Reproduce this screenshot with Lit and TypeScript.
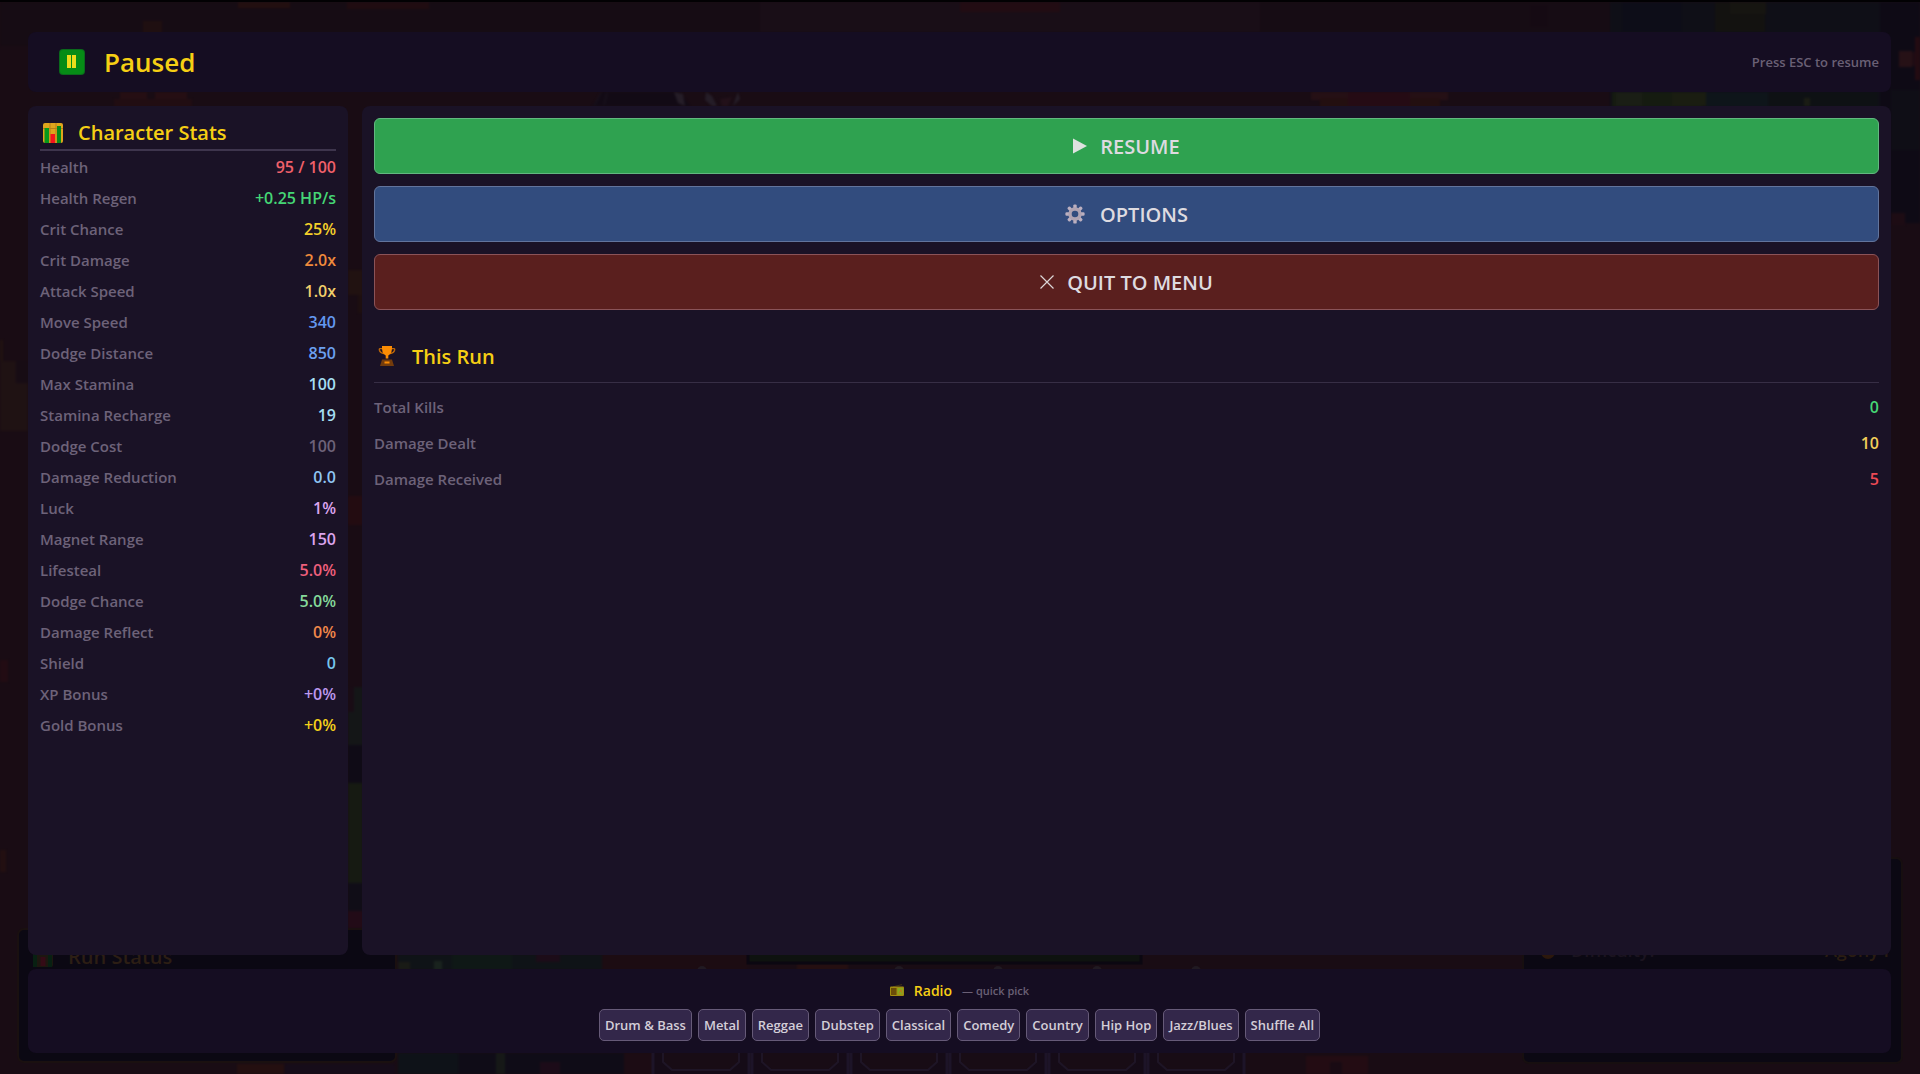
import { LitElement, html, svg, css } from "lit";
import { customElement } from "lit/decorators.js";

type Row = [label: string, value: string, color: string];
type Tile = [x: number, y: number, w: number, h: number, color: string];

const STATS: Row[] = [
  ["Health", "95 / 100", "#f0606a"],
  ["Health Regen", "+0.25 HP/s", "#45d675"],
  ["Crit Chance", "25%", "#f4d02a"],
  ["Crit Damage", "2.0x", "#f08a3c"],
  ["Attack Speed", "1.0x", "#f2cf6a"],
  ["Move Speed", "340", "#6398f0"],
  ["Dodge Distance", "850", "#6ba0f0"],
  ["Max Stamina", "100", "#a5dff2"],
  ["Stamina Recharge", "19", "#a5dff2"],
  ["Dodge Cost", "100", "#6d6279"],
  ["Damage Reduction", "0.0", "#8fc4f2"],
  ["Luck", "1%", "#dca4ee"],
  ["Magnet Range", "150", "#dca4ee"],
  ["Lifesteal", "5.0%", "#ee5f7c"],
  ["Dodge Chance", "5.0%", "#85d99a"],
  ["Damage Reflect", "0%", "#f0874a"],
  ["Shield", "0", "#76c6ee"],
  ["XP Bonus", "+0%", "#bd98ee"],
  ["Gold Bonus", "+0%", "#f4d01a"],
];

const RUN: Row[] = [
  ["Total Kills", "0", "#45d675"],
  ["Damage Dealt", "10", "#f2cf5a"],
  ["Damage Received", "5", "#ee4a55"],
];

const STATIONS = ["Drum & Bass", "Metal", "Reggae", "Dubstep", "Classical", "Comedy", "Country", "Hip Hop", "Jazz/Blues", "Shuffle All"];

// Dimmed map tiles and sprites of the level behind the menu.
const TILES: Tile[] = [
  [0, 2, 1920, 44, "#160c14"],
  [760, 2, 500, 30, "#190f18"],
  [238, 2, 52, 6, "#26100f"],
  [347, 2, 82, 7, "#230c10"],
  [143, 21, 19, 14, "#221010"],
  [960, 2, 100, 10, "#250d13"],
  [1530, 5, 18, 22, "#140a13"],
  [1610, 2, 310, 106, "#0c1018"],
  [1622, 2, 60, 30, "#0a0e1a"],
  [1715, 2, 50, 30, "#11140f"],
  [1730, 2, 36, 12, "#161810"],
  [1880, 2, 40, 221, "#0b0a16"],
  [1891, 90, 29, 60, "#0c0f17"],
  [1899, 51, 13, 16, "#2b1317"],
  [1912, 52, 8, 14, "#210b14"],
  [1915, 37, 5, 43, "#270b12"],
  [1891, 213, 14, 12, "#1f0c15"],
  [120, 92, 27, 16, "#290f13"],
  [155, 92, 32, 16, "#290f13"],
  [114, 99, 78, 8, "#240e12"],
  [1311, 92, 137, 8, "#2a1216"],
  [1320, 98, 120, 10, "#27100f"],
  [1348, 92, 62, 14, "#2a0b15"],
  [1612, 92, 90, 15, "#14200f"],
  [1616, 92, 26, 14, "#1b2416"],
  [1672, 92, 34, 14, "#1b2310"],
  [1706, 92, 62, 15, "#0b181d"],
  [1768, 92, 110, 15, "#0b1315"],
  [1804, 98, 6, 8, "#1b2214"],
  [0, 340, 3, 22, "#241510"],
  [0, 361, 28, 70, "#211413"],
  [16, 361, 12, 22, "#170c15"],
  [0, 660, 8, 22, "#250d13"],
  [0, 850, 6, 22, "#261110"],
  [348, 270, 15, 25, "#241410"],
  [358, 295, 5, 18, "#20110f"],
  [348, 496, 15, 29, "#270c11"],
  [348, 687, 15, 58, "#131a19"],
  [348, 687, 6, 25, "#190d16"],
  [348, 745, 15, 38, "#0c0b17"],
  [348, 783, 15, 100, "#151f12"],
  [348, 883, 15, 28, "#0e0e19"],
  [348, 911, 15, 17, "#260b18"],
  [398, 954, 204, 16, "#0c1618"],
  [398, 962, 12, 8, "#1a2017"],
  [434, 961, 8, 9, "#1a2b22"],
  [452, 954, 60, 16, "#0c1c17"],
  [536, 954, 24, 8, "#1d0c1a"],
  [602, 954, 146, 16, "#1d0c12"],
  [797, 964, 51, 6, "#2a1110"],
  [237, 1064, 47, 10, "#28110f"],
  [285, 1064, 110, 10, "#150c1b"],
  [398, 1053, 228, 21, "#0c0d18"],
  [398, 1053, 60, 21, "#0b151a"],
  [496, 1053, 9, 21, "#151d18"],
  [540, 1062, 20, 12, "#1e0b1a"],
  [624, 1053, 30, 21, "#1e0c14"],
  [1306, 1056, 62, 18, "#270d13"],
  [1330, 1062, 12, 12, "#190a13"],
];

const SLOTS = [653, 752, 851, 950, 1049, 1148];

const scene = svg`<svg class="scene" viewBox="0 0 1920 1074" preserveAspectRatio="none" aria-hidden="true">
  <g class="tiles">
    ${TILES.map(([x, y, w, h, c]) => svg`<rect x=${x} y=${y} width=${w} height=${h} fill=${c}/>`)}
    <path d="M592 106L602 92H680L690 106Z" fill="#100a16"/>
    <path d="M594 106L601 93M604 105L607 93" stroke="#191420" stroke-width="1.500"/>
    <path d="M674 92L678 103L685 106L683 94ZM706 92L705 100L712 106H717L712 96ZM738 92L740 99L733 106L736 97Z" fill="#29232e"/>
    <path d="M720 99L732 97L728 106H722Z" fill="#25121b"/>
  </g>
  <rect width="1920" height="2" fill="#020103"/>
  <rect x="748" y="940" width="393" height="23" fill="#0e120f" stroke="#0b0711" stroke-width="3"/>
  ${[702, 899, 998, 1097, 1196].map((x) => svg`<circle cx=${x} cy="971" r="5" fill="#211a22"/>`)}
  ${SLOTS.map((x) => svg`
    <rect x=${x} y="1030" width="96" height="60" rx="8" fill="#150b17" stroke="#1d1428" stroke-width="3"/>
    <path d="M${x + 10} 1040V1062L${x + 19} 1070H${x + 77}L${x + 86} 1062V1040Z" fill="#180c15" stroke="#1e1526" stroke-width="2"/>`)}
  <rect x="18" y="929" width="378" height="133" rx="6" fill="#0b0813" stroke="#1a1010" stroke-width="2"/>
  <rect x="1523" y="858" width="379" height="205" rx="6" fill="#0b0813" stroke="#170f10" stroke-width="2"/>
  <rect x="33" y="947" width="20" height="20" rx="2" fill="#1d1710"/>
  <path d="M35 952V967M50 950V967" stroke="#082012" stroke-width="4"/>
  <path d="M43 957V966" stroke="#340b16" stroke-width="5"/>
  <text class="scene-text" x="68" y="964" fill="#2c1e14">Run Status</text>
  <circle cx="1548" cy="952" r="7" fill="#2c180c"/>
  <text class="scene-text small" x="1571" y="957" fill="#1b1420">Difficulty:</text>
  <text class="scene-text small" x="1889" y="957" text-anchor="end" fill="#2a1d12">Agony I</text>
</svg>`;

const pauseIcon = svg`<svg class="icon-lg" viewBox="0 0 26 26" aria-hidden="true">
  <rect width="26" height="26" rx="4" fill="#0a6a1c"/><rect x="1" y="1" width="24" height="24" rx="3" fill="#068c16"/>
  <rect x="8" y="6" width="4" height="13" fill="#ecdc1c"/><rect x="13" y="6" width="4" height="13" fill="#ecdc1c"/></svg>`;

const chartIcon = svg`<svg class="icon" viewBox="0 0 20 20" aria-hidden="true">
  <rect width="20" height="20" rx="2" fill="#dfa51c"/>
  <path d="M0 5.500H20M7 0V20M13 0V20" stroke="#b8801a" stroke-width="1"/>
  <rect x="1.500" y="5" width="4.500" height="15" fill="#06981a"/>
  <rect x="14" y="3" width="4" height="17" fill="#068a18"/>
  <rect x="7.500" y="11" width="4.500" height="9" fill="#f4141c"/></svg>`;

const trophyIcon = svg`<svg class="icon" viewBox="0 0 20 20" aria-hidden="true">
  <path d="M5.500 2.600H3Q2 2.600 2.400 4.200Q3.200 7 7 7.600M14.500 2.600H17Q18 2.600 17.600 4.200Q16.800 7 13 7.600" fill="none" stroke="#c06808" stroke-width="1.300"/>
  <path d="M5 0H15Q15.600 7.600 11.300 9.500V12.500H8.700V9.500Q4.400 7.600 5 0Z" fill="#fb8c04"/>
  <path d="M5 13.500H15L17 20H3Z" fill="#743c0c"/><rect x="7.500" y="15.500" width="5" height="2" fill="#fb8c04"/></svg>`;

const radioIcon = svg`<svg class="icon-sm" viewBox="0 0 14 12" aria-hidden="true">
  <path d="M3 2.800L12 .6" stroke="#4d3f14" stroke-width=".8"/>
  <rect y="2.500" width="14" height="9.500" rx="1" fill="#a08a10"/>
  <rect x="1" y="4" width="5.500" height="7" fill="#6a4c08"/>
  <rect x="7.500" y="4" width="5.500" height="6.500" fill="#84a81e"/>
  <path d="M9 9.500L11 5.500L12 9.500" stroke="#b8781a" fill="none"/></svg>`;

const playIcon = svg`<svg class="glyph" viewBox="0 0 14 16" aria-hidden="true"><path d="M0 .5L14 8L0 15.500Z" fill="#dfe2e0"/></svg>`;

const gearIcon = svg`<svg class="icon" viewBox="0 0 20 20" aria-hidden="true"><g fill="#bcb0c0">
  ${[0, 45, 90, 135, 180, 225, 270, 315].map((a) => svg`<rect x="8.300" y=".4" width="3.400" height="5" rx="1.200" transform="rotate(${a} 10 10)"/>`)}</g>
  <circle cx="10" cy="10" r="5" fill="none" stroke="#b0a3b2" stroke-width="3.400"/></svg>`;

const closeIcon = svg`<svg class="glyph" viewBox="0 0 14 16" aria-hidden="true"><path d="M.5 1.500L13.500 14.500M13.500 1.500L.5 14.500" stroke="#dcd6d6" stroke-width="1.200"/></svg>`;

@customElement("app-root")
export class AppRoot extends LitElement {
  static styles = css`
    :host {
      display: block;
      font-family: "Open Sans", "Noto Sans", sans-serif;
      font-weight: 600;
      color: #dedbe0;
    }
    * { box-sizing: border-box; }
    .screen {
      position: relative;
      min-height: 100vh;
      padding: 32px 29px 21px 28px;
      display: flex;
      flex-direction: column;
      gap: 14px;
      background: #190c14;
      overflow: hidden;
    }
    .scene {
      position: absolute;
      inset: 0;
      width: 100%;
      height: 100%;
    }
    .tiles { opacity: 0.75; filter: blur(1px); }
    .scene-text { font-size: 20px; }
    .scene-text.small { font-size: 18px; }
    .bar, .panel { position: relative; border-radius: 8px; }
    .bar { background: #150d22; }
    .panel { background: #1a1226; padding: 11px 12px 12px; }
    .header {
      height: 60px;
      padding: 0 12px 0 31px;
      display: flex;
      align-items: center;
      gap: 19px;
    }
    h1, h2 { margin: 0; font-weight: 600; color: #f6cf14; }
    h1 { font-size: 26px; flex: 1; }
    h2 { font-size: 20px; }
    .hint { font-size: 13px; color: #6a6075; }
    .body { flex: 1; display: flex; gap: 14px; }
    .stats { width: 320px; }
    .main { flex: 1; padding-top: 12px; }
    .title {
      display: flex;
      align-items: center;
      gap: 15px;
      padding-left: 3px;
      border-bottom: 1px solid #372e45;
    }
    .stats .title { height: 34px; border-bottom: 2px solid #3e354d; padding-bottom: 1px; }
    .main .title { height: 49px; margin: 24px 0 6px; padding-bottom: 4px; }
    table { width: 100%; border-collapse: collapse; }
    th { text-align: left; font-size: 15px; font-weight: 600; color: #6d6279; padding: 0; }
    td { text-align: right; font-size: 16px; padding: 0; }
    .stats tr { height: 31px; }
    .main tr { height: 36px; }
    .actions { display: flex; flex-direction: column; gap: 12px; }
    button { font-family: inherit; font-weight: 600; color: #dedbe0; cursor: pointer; }
    .action {
      height: 56px;
      display: flex;
      align-items: center;
      justify-content: center;
      gap: 13px;
      font-size: 20px;
      border: 1px solid;
      border-radius: 6px;
    }
    .resume { background: #2fa250; border-color: #62b880; }
    .options { background: #324c7e; border-color: #62749c; gap: 15px; }
    .quit { background: #5a1f1e; border-color: #8a5358; }
    .radio {
      padding: 11px 12px 12px;
      display: flex;
      flex-direction: column;
      align-items: center;
      gap: 9px;
    }
    .radio-title { display: flex; align-items: center; gap: 10px; height: 20px; }
    .radio-title h2 { font-size: 14px; }
    .sub { font-size: 11px; color: #6a6075; }
    .stations { display: flex; flex-wrap: wrap; justify-content: center; gap: 6px; }
    .station {
      height: 32px;
      padding: 0 5px;
      font-size: 13px;
      color: #d3ced8;
      background: #33274a;
      border: 1px solid #665a78;
      border-radius: 5px;
    }
    .icon-lg { width: 26px; height: 26px; }
    .icon { width: 20px; height: 20px; }
    .icon-sm { width: 14px; height: 12px; }
    .glyph { width: 14px; height: 16px; }
  `;

  private rows(rows: Row[], label: string) {
    return html`<table aria-label=${label}><tbody>
      ${rows.map(([name, value, color]) => html`<tr><th scope="row">${name}</th><td style="color:${color}">${value}</td></tr>`)}
    </tbody></table>`;
  }

  render() {
    return html`
      <main class="screen">
        ${scene}
        <header class="bar header">${pauseIcon}<h1>Paused</h1><span class="hint">Press ESC to resume</span></header>
        <div class="body">
          <section class="panel stats">
            <div class="title">${chartIcon}<h2>Character Stats</h2></div>
            ${this.rows(STATS, "Character Stats")}
          </section>
          <section class="panel main">
            <div class="actions">
              <button class="action resume">${playIcon}RESUME</button>
              <button class="action options">${gearIcon}OPTIONS</button>
              <button class="action quit">${closeIcon}QUIT TO MENU</button>
            </div>
            <div class="title">${trophyIcon}<h2>This Run</h2></div>
            ${this.rows(RUN, "This Run")}
          </section>
        </div>
        <footer class="bar radio">
          <div class="radio-title">${radioIcon}<h2>Radio</h2><span class="sub">— quick pick</span></div>
          <div class="stations">${STATIONS.map((s) => html`<button class="station">${s}</button>`)}</div>
        </footer>
      </main>`;
  }
}
